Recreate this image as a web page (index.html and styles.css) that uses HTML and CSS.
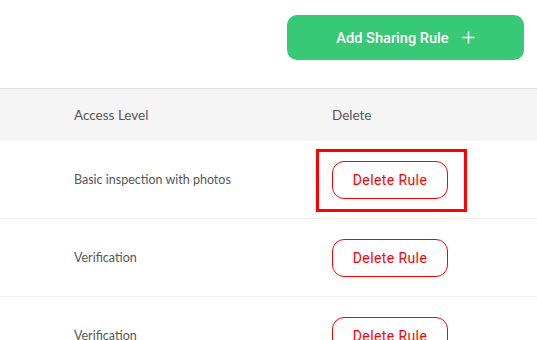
FILE: index.html
```html
<!DOCTYPE html>
<html>
<head>
    <meta http-equiv="Content-Type" content="text/html; charset=utf-8" />
    <title>Sharing Rules</title>
    <link rel="stylesheet" href="styles.css">
</head>
<body>
    <div class="content">
        <div class="toolbar">
            <span class="btn-add">Add Sharing Rule
                <svg class="plus" width="13" height="13" viewBox="0 0 13 13"><path d="M6.5 0.5v12M0.5 6.5h12" stroke="#fff" stroke-width="1.5" fill="none"/></svg>
            </span>
        </div>
        <div class="rules">
            <div class="rules-row rules-head">
                <span>Access Level</span>
                <span>Delete</span>
            </div>
            <div class="rules-row">
                <span>Basic inspection with photos</span>
                <span><i class="btn-delete highlight">Delete Rule</i></span>
            </div>
            <div class="rules-row">
                <span>Verification</span>
                <span><i class="btn-delete">Delete Rule</i></span>
            </div>
            <div class="rules-row">
                <span>Verification</span>
                <span><i class="btn-delete">Delete Rule</i></span>
            </div>
        </div>
    </div>
</body>
</html>
```

FILE: styles.css
```css
* {
    margin: 0;
    padding: 0;
    box-sizing: border-box;
}

html, body {
    width: 100%;
    height: 100%;
    overflow: hidden;
}

body {
    background: #fff;
    font-family: "Lato", "Open Sans", sans-serif;
}

.toolbar {
    height: 89px;
    padding: 15px 13px 0 0;
    display: flex;
    justify-content: flex-end;
    align-items: flex-start;
    border-bottom: 1px solid #dedede;
}

.btn-add {
    display: flex;
    align-items: center;
    justify-content: center;
    gap: 13px;
    width: 237px;
    height: 45px;
    border-radius: 10px;
    background: #38c976;
    color: #fff;
    font-family: "Roboto", sans-serif;
    font-size: 14.6px;
    font-weight: 500;
}

.plus {
    display: block;
}

.rules-row {
    display: grid;
    grid-template-columns: 258px 1fr;
    align-items: center;
    height: 78px;
    padding-left: 74px;
    border-bottom: 1px solid #f0f0f0;
    font-size: 12.5px;
    color: #555;
}

.rules-head {
    height: 52px;
    background: #f5f5f5;
    border-bottom: none;
    font-size: 13.5px;
}

.btn-delete {
    position: relative;
    display: inline-flex;
    align-items: center;
    justify-content: center;
    width: 116px;
    height: 38px;
    border: 1px solid #ff0000;
    border-radius: 12px;
    color: #ff0000;
    font-family: "Roboto", sans-serif;
    font-size: 14px;
    font-style: normal;
    letter-spacing: 0.4px;
}

.highlight::after {
    content: "";
    position: absolute;
    top: -13px;
    left: -17px;
    right: -20px;
    bottom: -14px;
    border: 3px solid #ff0000;
}
```
